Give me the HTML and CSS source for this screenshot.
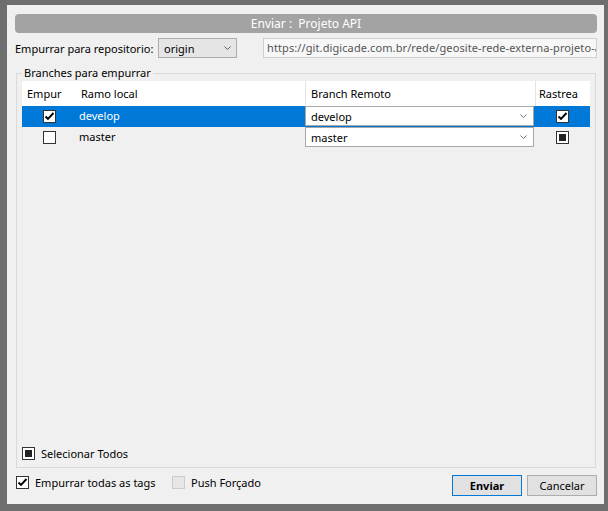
FILE: index.html
```html
<!DOCTYPE html>
<html lang="pt">
<head>
<meta charset="utf-8">
<title>Enviar</title>
<link rel="stylesheet" href="styles.css">
</head>
<body>
<div class="dialog">
  <div class="titlebar">Enviar :&nbsp; Projeto API</div>

  <div class="repo-row">
    <span class="repo-label">Empurrar para repositorio:</span>
    <div class="combo repo-combo">
      <span>origin</span>
      <svg class="chev" width="7" height="4" viewBox="0 0 7 4"><path d="M0.5 0.5 L3.5 3.5 L6.5 0.5" fill="none" stroke="#606060" stroke-width="1"/></svg>
    </div>
    <div class="url">https://git.digicade.com.br/rede/geosite-rede-externa-projeto-api.git</div>
  </div>

  <fieldset class="group">
    <legend>Branches para empurrar</legend>
    <div class="grid">
      <div class="thead">
        <div class="th c1">Empur</div>
        <div class="th c2">Ramo local</div>
        <div class="th c3">Branch Remoto</div>
        <div class="th c4">Rastrea</div>
      </div>
      <div class="row sel">
        <div class="cell c1"><span class="cb"><svg width="11" height="11" viewBox="0 0 11 11"><path d="M1.5 5.5 L4 8 L9.5 2" fill="none" stroke="#000" stroke-width="1.9"/></svg></span></div>
        <div class="cell c2">develop</div>
        <div class="cell c3">
          <div class="cell-combo"><span>develop</span><svg width="7" height="4" viewBox="0 0 7 4"><path d="M0.5 0.5 L3.5 3.5 L6.5 0.5" fill="none" stroke="#707070" stroke-width="1"/></svg></div>
        </div>
        <div class="cell c4"><span class="cb"><svg width="11" height="11" viewBox="0 0 11 11"><path d="M1.5 5.5 L4 8 L9.5 2" fill="none" stroke="#000" stroke-width="1.9"/></svg></span></div>
      </div>
      <div class="row">
        <div class="cell c1"><span class="cb"></span></div>
        <div class="cell c2">master</div>
        <div class="cell c3">
          <div class="cell-combo"><span>master</span><svg width="7" height="4" viewBox="0 0 7 4"><path d="M0.5 0.5 L3.5 3.5 L6.5 0.5" fill="none" stroke="#707070" stroke-width="1"/></svg></div>
        </div>
        <div class="cell c4"><span class="cb ind"></span></div>
      </div>
    </div>
    <div class="select-all">
      <span class="cb ind"></span>
      <span>Selecionar Todos</span>
    </div>
  </fieldset>

  <div class="bottom">
    <div class="chk-item tags">
      <span class="cb"><svg width="11" height="11" viewBox="0 0 11 11"><path d="M1.5 5.5 L4 8 L9.5 2" fill="none" stroke="#000" stroke-width="1.9"/></svg></span>
      <span>Empurrar todas as tags</span>
    </div>
    <div class="chk-item">
      <span class="cb disabled"></span>
      <span>Push Forçado</span>
    </div>
    <div class="spacer"></div>
    <button class="btn primary">Enviar</button>
    <button class="btn">Cancelar</button>
  </div>
</div>
</body>
</html>
```

FILE: styles.css
```css
* { box-sizing: border-box; }

html, body {
  margin: 0;
  padding: 0;
}

body {
  background: #6e6e6e;
  width: 608px;
  height: 511px;
  overflow: hidden;
  font-family: "Noto Sans", "Open Sans", sans-serif;
  font-size: 11px;
  color: #000;
}

.dialog {
  margin: 5px 0 0 7px;
  width: 597px;
  height: 499px;
  background: #f0f0f0;
  padding: 9px 7px 8px 8px;
  display: flex;
  flex-direction: column;
}

.titlebar {
  height: 19px;
  background: #a3a3a3;
  border-radius: 4px;
  color: #fff;
  text-align: center;
  line-height: 19px;
  font-size: 12px;
  flex: none;
}

.repo-row {
  display: flex;
  align-items: center;
  margin-top: 5px;
  height: 20px;
  flex: none;
}

.repo-label {
  width: 143px;
  white-space: nowrap;
}

.combo {
  display: flex;
  align-items: center;
  justify-content: space-between;
  height: 20px;
  border: 1px solid #adadad;
  background: #e5e5e5;
  padding: 0 5px 0 5px;
}

.repo-combo {
  width: 79px;
}

.url {
  margin-left: 26px;
  flex: 1;
  height: 20px;
  border: 1px solid #cfcfcf;
  background: #f7f7f7;
  padding-left: 3px;
  line-height: 18px;
  white-space: nowrap;
  overflow: hidden;
  color: #555;
  letter-spacing: 0.1px;
}

.group {
  margin: 7px 1px 0 1px;
  padding: 0 5px 6px 5px;
  border: 1px solid #dadada;
  flex: 1;
  display: flex;
  flex-direction: column;
  min-width: 0;
}

.group legend {
  padding: 0 2px;
  line-height: 16px;
}

.grid {
  flex: 1;
}

.thead {
  display: flex;
  height: 25px;
  background: #fff;
}

.th {
  line-height: 25px;
  padding-left: 5px;
  overflow: hidden;
  white-space: nowrap;
}

.c1 { width: 54px; flex: none; }
.c2 { width: 229px; flex: none; }
.c3 { width: 230px; flex: none; }
.c4 { width: 55px; flex: none; }

.th.c3, .th.c4 { border-left: 1px solid #e5e5e5; }
.th.c4 { padding-left: 3px; }

.row {
  display: flex;
  height: 21px;
}

.row.sel {
  background: #0078d7;
  color: #fff;
}

.cell.c1, .cell.c4 {
  display: flex;
  justify-content: center;
  align-items: center;
}

.cell.c2 {
  padding-left: 3px;
  line-height: 19px;
}

.cell.c3 {
  padding-bottom: 1px;
}

.cell-combo {
  width: 229px;
  height: 20px;
  background: #fff;
  color: #000;
  border: 1px solid #a8a8a8;
  display: flex;
  align-items: center;
  justify-content: space-between;
  padding: 0 6px 0 5px;
}

.cb {
  width: 13px;
  height: 13px;
  border: 1px solid #333;
  background: #fff;
  display: inline-flex;
  align-items: center;
  justify-content: center;
  flex: none;
}

.cb.ind::after {
  content: "";
  width: 7px;
  height: 7px;
  background: #222;
}

.cb.disabled {
  border-color: #cccccc;
  background: #e6e6e6;
}

.select-all {
  display: flex;
  align-items: center;
  gap: 6px;
  height: 16px;
  flex: none;
}

.bottom {
  display: flex;
  align-items: flex-start;
  margin-top: 7px;
  height: 21px;
  flex: none;
}

.chk-item {
  display: flex;
  align-items: center;
  gap: 6px;
  height: 15px;
  white-space: nowrap;
}

.chk-item.tags {
  margin-left: 1px;
  width: 156px;
}

.spacer { flex: 1; }

.btn {
  width: 70px;
  height: 21px;
  border: 1px solid #adadad;
  background: #e1e1e1;
  font: inherit;
  color: #000;
  padding: 0;
  margin-left: 5px;
}

.btn.primary {
  border-color: #0078d7;
  font-weight: bold;
}
```
